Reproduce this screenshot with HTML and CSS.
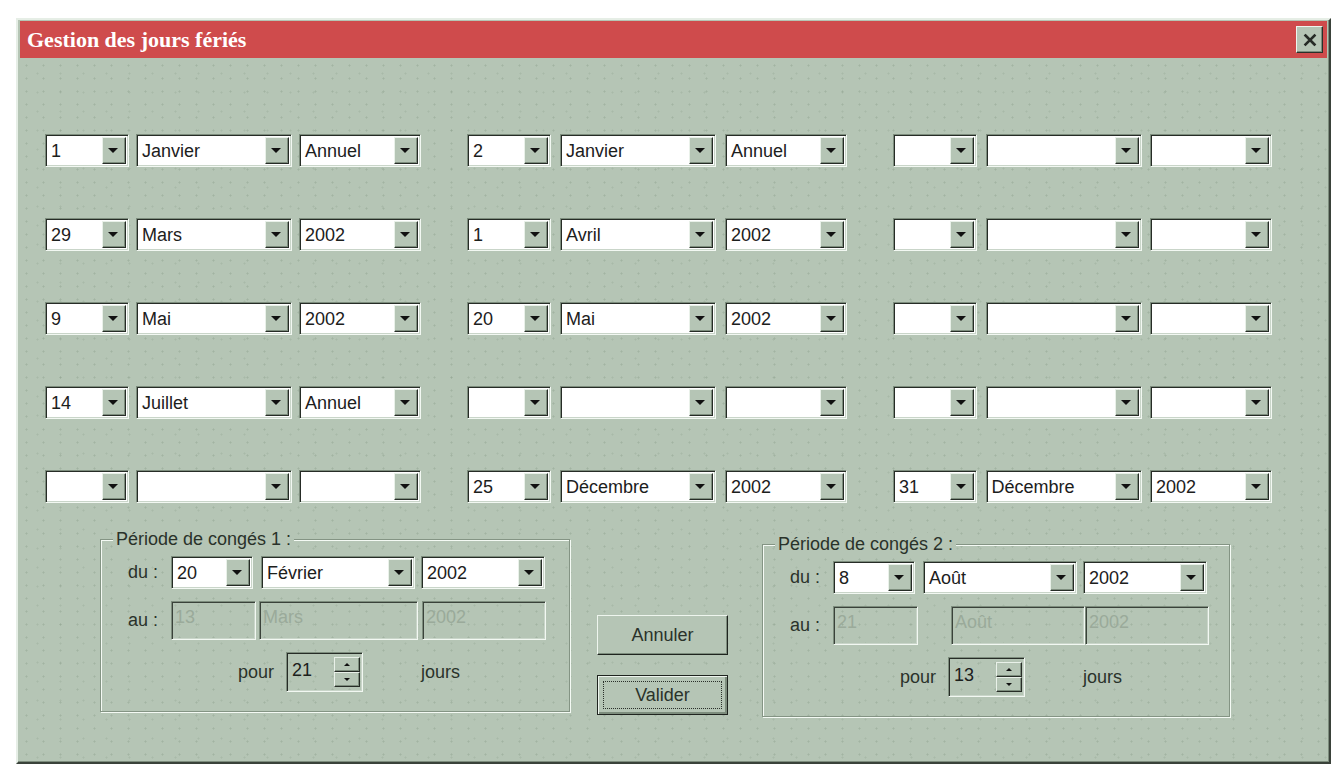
FILE: index.html
```html
<!DOCTYPE html>
<html lang="fr">
<head>
    <meta charset="UTF-8">
    <title>Gestion des jours fériés</title>
    <link rel="stylesheet" href="styles.css">
</head>
<body>
    <div class="window">
        <div class="titlebar">
            <span class="title">Gestion des jours fériés</span>
            <button class="close" title="Fermer">
                <svg width="14" height="14" viewBox="0 0 14 14">
                    <path d="M2.5 2.5 L11.5 11.5 M11.5 2.5 L2.5 11.5" stroke="#262b26" stroke-width="2.6" stroke-linecap="square"/>
                </svg>
            </button>
        </div>

        <div class="client">
            <!-- 15 jours fériés : jour / mois / année (ou Annuel) -->
            <div class="holidays">
                <div class="date-pick">
                    <div class="combo day"><span>1</span><i></i></div>
                    <div class="combo month"><span>Janvier</span><i></i></div>
                    <div class="combo year"><span>Annuel</span><i></i></div>
                </div>
                <div class="date-pick">
                    <div class="combo day"><span>2</span><i></i></div>
                    <div class="combo month"><span>Janvier</span><i></i></div>
                    <div class="combo year"><span>Annuel</span><i></i></div>
                </div>
                <div class="date-pick">
                    <div class="combo day"><span></span><i></i></div>
                    <div class="combo month"><span></span><i></i></div>
                    <div class="combo year"><span></span><i></i></div>
                </div>

                <div class="date-pick">
                    <div class="combo day"><span>29</span><i></i></div>
                    <div class="combo month"><span>Mars</span><i></i></div>
                    <div class="combo year"><span>2002</span><i></i></div>
                </div>
                <div class="date-pick">
                    <div class="combo day"><span>1</span><i></i></div>
                    <div class="combo month"><span>Avril</span><i></i></div>
                    <div class="combo year"><span>2002</span><i></i></div>
                </div>
                <div class="date-pick">
                    <div class="combo day"><span></span><i></i></div>
                    <div class="combo month"><span></span><i></i></div>
                    <div class="combo year"><span></span><i></i></div>
                </div>

                <div class="date-pick">
                    <div class="combo day"><span>9</span><i></i></div>
                    <div class="combo month"><span>Mai</span><i></i></div>
                    <div class="combo year"><span>2002</span><i></i></div>
                </div>
                <div class="date-pick">
                    <div class="combo day"><span>20</span><i></i></div>
                    <div class="combo month"><span>Mai</span><i></i></div>
                    <div class="combo year"><span>2002</span><i></i></div>
                </div>
                <div class="date-pick">
                    <div class="combo day"><span></span><i></i></div>
                    <div class="combo month"><span></span><i></i></div>
                    <div class="combo year"><span></span><i></i></div>
                </div>

                <div class="date-pick">
                    <div class="combo day"><span>14</span><i></i></div>
                    <div class="combo month"><span>Juillet</span><i></i></div>
                    <div class="combo year"><span>Annuel</span><i></i></div>
                </div>
                <div class="date-pick">
                    <div class="combo day"><span></span><i></i></div>
                    <div class="combo month"><span></span><i></i></div>
                    <div class="combo year"><span></span><i></i></div>
                </div>
                <div class="date-pick">
                    <div class="combo day"><span></span><i></i></div>
                    <div class="combo month"><span></span><i></i></div>
                    <div class="combo year"><span></span><i></i></div>
                </div>

                <div class="date-pick">
                    <div class="combo day"><span></span><i></i></div>
                    <div class="combo month"><span></span><i></i></div>
                    <div class="combo year"><span></span><i></i></div>
                </div>
                <div class="date-pick">
                    <div class="combo day"><span>25</span><i></i></div>
                    <div class="combo month"><span>Décembre</span><i></i></div>
                    <div class="combo year"><span>2002</span><i></i></div>
                </div>
                <div class="date-pick">
                    <div class="combo day"><span>31</span><i></i></div>
                    <div class="combo month"><span>Décembre</span><i></i></div>
                    <div class="combo year"><span>2002</span><i></i></div>
                </div>
            </div>

            <div class="bottom">
                <div class="group">
                    <div class="legend">Période de congés 1 :</div>
                    <div class="line">
                        <label>du :</label>
                        <div class="combo g-day"><span>20</span><i></i></div>
                        <div class="combo g-month"><span>Février</span><i></i></div>
                        <div class="combo g-year"><span>2002</span><i></i></div>
                    </div>
                    <div class="line">
                        <label>au :</label>
                        <div class="field f-day">13</div>
                        <div class="field f-month">Mars</div>
                        <div class="field f-year">2002</div>
                    </div>
                    <div class="spin-line">
                        <span>pour</span>
                        <div class="spin">
                            <span>21</span>
                            <div class="arrows"><b class="up"></b><b class="down"></b></div>
                        </div>
                        <span class="unit">jours</span>
                    </div>
                </div>

                <div class="actions">
                    <button class="btn">Annuler</button>
                    <button class="btn default"><span>Valider</span></button>
                </div>

                <div class="group second">
                    <div class="legend">Période de congés 2 :</div>
                    <div class="line">
                        <label>du :</label>
                        <div class="combo g-day"><span>8</span><i></i></div>
                        <div class="combo g-month"><span>Août</span><i></i></div>
                        <div class="combo g-year"><span>2002</span><i></i></div>
                    </div>
                    <div class="line">
                        <label>au :</label>
                        <div class="field f-day">21</div>
                        <div class="field f-month shifted">Août</div>
                        <div class="field f-year">2002</div>
                    </div>
                    <div class="spin-line">
                        <span>pour</span>
                        <div class="spin">
                            <span>13</span>
                            <div class="arrows"><b class="up"></b><b class="down"></b></div>
                        </div>
                        <span class="unit">jours</span>
                    </div>
                </div>
            </div>
        </div>
    </div>
</body>
</html>
```

FILE: styles.css
```css
body {
    margin: 0;
    background-color: #fff;
    font-family: "Liberation Sans", Arial, sans-serif;
    font-size: 18px;
    color: #262c26;
}

/* Fenêtre */
.window {
    margin: 18px 0 0 16px;
    width: 1315px;
    height: 746px;
    box-sizing: border-box;
    padding: 1px 2px 2px 2px;
    border: 2px solid;
    border-color: #e6eee6 #3a423a #3a423a #e6eee6;
    box-shadow: inset -1px -1px 0 #7d8d7d;
    background-color: #b5c5b5;
    background-image:
        radial-gradient(circle, rgba(120,140,120,0.3) 0.8px, transparent 1.3px),
        radial-gradient(circle, rgba(125,145,125,0.22) 0.8px, transparent 1.3px);
    background-size: 17px 13px, 23px 19px;
    background-position: 0 0, 8px 6px;
}
.titlebar {
    height: 37px;
    display: flex;
    align-items: center;
    justify-content: space-between;
    padding: 0 4px 0 7px;
    background-color: #cf4b4c;
}
.title {
    font-family: "Liberation Serif", "Times New Roman", serif;
    font-weight: bold;
    font-size: 22px;
    color: #fff;
}
.close {
    width: 27px;
    height: 27px;
    padding: 0;
    display: flex;
    align-items: center;
    justify-content: center;
    background-color: #b5c5b5;
    border: 1px solid;
    border-color: #eef5ee #2a302a #2a302a #eef5ee;
    box-shadow: inset -1px -1px 0 #7d8d7d;
}

/* Grille des jours fériés */
.client {
    padding-top: 76px;
}
.holidays {
    display: grid;
    grid-template-columns: 376px 380px 379px;
    column-gap: 46px;
    row-gap: 51px;
    padding-left: 25px;
}
.date-pick {
    display: flex;
    justify-content: space-between;
}

/* Liste déroulante */
.combo {
    display: flex;
    height: 33px;
    box-sizing: border-box;
    padding: 2px;
    background-color: #fff;
    border: 1px solid;
    border-color: #7d8d7d #f2f8f2 #f2f8f2 #7d8d7d;
    box-shadow: inset 1px 1px 0 #262c26, inset -1px -1px 0 #c9d5c9;
}
.combo span {
    flex: 1;
    padding-left: 3px;
    line-height: 28px;
    color: #1c201c;
    white-space: nowrap;
    overflow: hidden;
}
.combo i {
    position: relative;
    width: 24px;
    box-sizing: border-box;
    background-color: #b5c5b5;
    border: 1px solid;
    border-color: #e9f1e9 #262c26 #262c26 #e9f1e9;
    box-shadow: inset -1px -1px 0 #7d8d7d;
}
.combo i::after {
    content: "";
    position: absolute;
    left: 50%;
    top: 50%;
    margin: -3px 0 0 -6px;
    border-left: 5px solid transparent;
    border-right: 5px solid transparent;
    border-top: 5px solid #111;
}
.day { width: 84px; }
.month { width: 156px; }
.year { width: 122px; }

/* Périodes de congés */
.bottom {
    display: flex;
    align-items: flex-start;
    margin-top: 36px;
    padding-left: 80px;
}
.group {
    position: relative;
    width: 470px;
    height: 173px;
    box-sizing: border-box;
    padding-top: 16px;
    border: 1px solid #849484;
    box-shadow: inset 1px 1px 0 #f4faf4, 1px 1px 0 #f4faf4;
}
.group.second {
    width: 468px;
    margin-top: 5px;
    margin-left: 34px;
}
.legend {
    position: absolute;
    top: -12px;
    left: 12px;
    padding: 0 3px;
    line-height: 22px;
    background-color: #b5c5b5;
    color: #2a322a;
}
.line {
    display: flex;
    align-items: center;
    margin-bottom: 12px;
}
.line label {
    width: 57px;
    margin-right: 13px;
    text-align: right;
    color: #2a322a;
}
.g-day { width: 82px; margin-right: 8px; }
.g-month { width: 154px; margin-right: 6px; }
.g-year { width: 124px; }

.field {
    height: 39px;
    box-sizing: border-box;
    padding: 0 0 6px 3px;
    display: flex;
    align-items: center;
    color: #9aaa9a;
    border: 1px solid;
    border-color: #7d8d7d #f2f8f2 #f2f8f2 #7d8d7d;
    box-shadow: inset 1px 1px 0 #3a423a, inset -1px -1px 0 #c9d5c9;
}
.f-day { width: 85px; margin-right: 3px; }
.f-month { width: 159px; margin-right: 4px; }
.f-year { width: 124px; }
.f-month.shifted { width: 134px; margin-left: 30px; margin-right: 0; }

.spin-line {
    display: flex;
    align-items: center;
    padding-left: 137px;
    color: #2a322a;
}
.spin {
    display: flex;
    width: 77px;
    height: 40px;
    box-sizing: border-box;
    margin-left: 12px;
    padding: 2px;
    border: 1px solid;
    border-color: #7d8d7d #f2f8f2 #f2f8f2 #7d8d7d;
    box-shadow: inset 1px 1px 0 #262c26, inset -1px -1px 0 #c9d5c9;
}
.spin span {
    flex: 1;
    padding: 0 0 4px 3px;
    line-height: 30px;
    color: #1c201c;
}
.arrows {
    display: flex;
    flex-direction: column;
    width: 26px;
    padding: 2px 0;
}
.arrows b {
    position: relative;
    flex: 1;
    background-color: #b5c5b5;
    border: 1px solid;
    border-color: #e9f1e9 #262c26 #262c26 #e9f1e9;
    box-shadow: inset -1px -1px 0 #7d8d7d;
}
.arrows b::after {
    content: "";
    position: absolute;
    left: 50%;
    top: 50%;
    margin: -2px 0 0 -3px;
    border-left: 3px solid transparent;
    border-right: 3px solid transparent;
}
.arrows .up::after { border-bottom: 3px solid #111; }
.arrows .down::after { border-top: 3px solid #111; }
.unit { margin-left: 58px; }

/* Boutons */
.actions {
    display: flex;
    flex-direction: column;
    gap: 20px;
    width: 131px;
    margin: 76px 0 0 27px;
}
.btn {
    height: 40px;
    padding: 0;
    font-family: inherit;
    font-size: 18px;
    color: #2a322a;
    background-color: #b5c5b5;
    border: 1px solid;
    border-color: #eef5ee #1f241f #1f241f #eef5ee;
    box-shadow: inset -1px -1px 0 #7d8d7d;
}
.btn.default {
    border: 1px solid #1f241f;
    box-shadow: inset 1px 1px 0 #eef5ee, inset -2px -2px 0 #7d8d7d;
    padding: 5px;
}
.btn.default span {
    display: block;
    height: 100%;
    box-sizing: border-box;
    line-height: 26px;
    border: 1px dotted #2a302a;
}
```
